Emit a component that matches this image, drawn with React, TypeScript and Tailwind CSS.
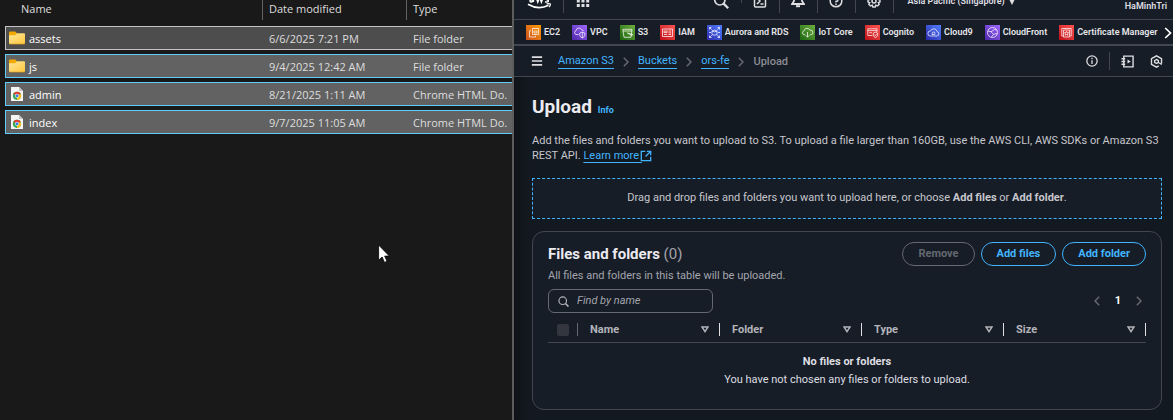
import type { ReactNode } from "react";

type Entry = { name: string; date: string; type: string; kind: "folder" | "html" };

const entries: Entry[] = [
  { name: "assets", date: "6/6/2025 7:21 PM", type: "File folder", kind: "folder" },
  { name: "js", date: "9/4/2025 12:42 AM", type: "File folder", kind: "folder" },
  { name: "admin", date: "8/21/2025 1:11 AM", type: "Chrome HTML Do.", kind: "html" },
  { name: "index", date: "9/7/2025 11:05 AM", type: "Chrome HTML Do.", kind: "html" },
];

function FolderIcon() {
  return (
    <svg viewBox="0 0 16 14" className="h-3.5 w-4 shrink-0" aria-hidden="true">
      <defs>
        <linearGradient id="folder" x1="0" y1="0" x2="1" y2="1">
          <stop offset="0" stopColor="#ffe69a" />
          <stop offset="1" stopColor="#ffc83d" />
        </linearGradient>
      </defs>
      <path d="M0 1.5Q0 .5 1 .5H6.3L8 2.3V5H0Z" fill="#f2a900" />
      <path d="M0 4.3H6L8 2.3H15Q16 2.3 16 3.3V12Q16 13 15 13H1Q0 13 0 12Z" fill="url(#folder)" />
      <path d="M.4 13H15.6" stroke="#e0a020" strokeWidth=".7" />
    </svg>
  );
}

function ChromeFileIcon() {
  return (
    <svg viewBox="0 0 12 14" className="mx-0.5 h-3.5 w-3 shrink-0" aria-hidden="true">
      <path d="M0 0H8L12 4V14H0Z" fill="#f5f5f5" />
      <path d="M8 0L12 4H8Z" fill="#c4c4c4" />
      <circle cx="6" cy="8.8" r="4.1" fill="#34a853" />
      <path d="M6 8.8L2.4 6.8A4.1 4.1 0 0 1 9.7 7Z" fill="#e33b2e" />
      <path d="M6 8.8L9.7 7A4.1 4.1 0 0 1 6 12.9Z" fill="#fbc116" />
      <circle cx="6" cy="8.8" r="2" fill="#fff" />
      <circle cx="6" cy="8.8" r="1.5" fill="#3b78e7" />
    </svg>
  );
}

function Explorer() {
  const cols = "grid grid-cols-[258px_144px_minmax(0,1fr)]";
  return (
    <section className="min-w-0 overflow-hidden border-r-2 border-[#5c5c5c] bg-[#191919] pl-[5px] font-['Open_Sans',sans-serif] text-[11px] text-[#dedede]">
      <div className={`${cols} h-5 leading-[17px]`}>
        <span className="border-r border-[#636363] pl-4">Name</span>
        <span className="border-r border-[#636363] pl-1.5">Date modified</span>
        <span className="pl-1.5">Type</span>
      </div>
      <ul className="mt-1.5 flex flex-col gap-1">
        {entries.map((e, i) => (
          <li
            key={e.name}
            className={`${cols} h-6 items-center border border-r-0 ${
              i === 0 ? "border-[#c4c4c4] bg-[#4d4d4d]" : "border-[#60cdff] bg-[#626262]"
            }`}
          >
            <span className="flex items-center gap-1 pl-[3px] text-white">
              {e.kind === "folder" ? <FolderIcon /> : <ChromeFileIcon />}
              <span className="pt-0.5">{e.name}</span>
            </span>
            <span className="pt-0.5 pl-[5px]">{e.date}</span>
            <span className="pt-0.5 pl-[5px] whitespace-nowrap">{e.type}</span>
          </li>
        ))}
      </ul>
    </section>
  );
}

const services: { name: string; tile: string; icon: ReactNode }[] = [
  {
    name: "EC2",
    tile: "bg-linear-to-tr from-[#c8511b] to-[#ff9900]",
    icon: <path d="M6.5 3.5H12.5V9.5H6.5ZM5 5.8H3.5V12H9.5V10.8M8 6H11V8H8Z" />,
  },
  {
    name: "VPC",
    tile: "bg-linear-to-tr from-[#4d27aa] to-[#a166ff]",
    icon: <path d="M6.5 9.5H4A2 2 0 0 1 4 5.7A3 3 0 0 1 9.7 4.8A2 2 0 0 1 11.6 6M7.8 8L10.3 7L12.8 8V10.5Q12.5 12 10.3 13Q8 12 7.8 10.5ZM10.3 7V13" />,
  },
  {
    name: "S3",
    tile: "bg-linear-to-tr from-[#1b660f] to-[#6cae3e]",
    icon: <path d="M2.8 4.3H12L11 12.3H4L2.8 4.3ZM3 6H12M7.5 8L12.8 9.6L12 10.6L7.5 8" />,
  },
  {
    name: "IAM",
    tile: "bg-linear-to-tr from-[#bd0816] to-[#ff5252]",
    icon: <path d="M2.5 4H12.5V11.5H2.5ZM4 6H7V7.6H4ZM8.5 6H11M8.5 7.8H11M4 9.5H7M8.5 9.5H11" />,
  },
  {
    name: "Aurora and RDS",
    tile: "bg-linear-to-tr from-[#2e27ad] to-[#527fff]",
    icon: <path d="M2.5 4.5V2.5H4.5M10.5 2.5H12.5V4.5M12.5 10.5V12.5H10.5M4.5 12.5H2.5V10.5M2.5 2.5L4.7 4.7M12.5 2.5L10.3 4.7M2.5 12.5L4.7 10.3M12.5 12.5L10.3 10.3M5 6Q7.5 4.2 10 6V9.5Q7.5 11 5 9.5ZM5 6Q7.5 7.7 10 6M2 7.5H4M11 7.5H13" />,
  },
  {
    name: "IoT Core",
    tile: "bg-linear-to-tr from-[#1b660f] to-[#6cae3e]",
    icon: <path d="M5.2 9.8H4A2.1 2.1 0 0 1 4 5.8A3.2 3.2 0 0 1 10 5.2A2.3 2.3 0 0 1 11 9.8H9.8M7.5 7V12M5.8 10.4L7.5 12.2L9.2 10.4" />,
  },
  {
    name: "Cognito",
    tile: "bg-linear-to-tr from-[#bd0816] to-[#ff5252]",
    icon: <path d="M7.3 10.5H2.8V3.8H12V7M2.8 5.6H12M4.2 7.7H7M8.3 8L10.4 7.2L12.6 8V10.3Q12.2 11.8 10.4 12.6Q8.6 11.8 8.3 10.3ZM9.3 9.8L10.2 10.7L11.6 9.1" />,
  },
  {
    name: "Cloud9",
    tile: "bg-linear-to-tr from-[#2e27ad] to-[#527fff]",
    icon: <path d="M4.3 11H11A2.3 2.3 0 0 0 11 6.5A3.4 3.4 0 0 0 4.5 6A2.5 2.5 0 0 0 4.3 11ZM6.3 8.5A1.3 1.3 0 1 1 8.8 8.7V9.5H6V8.3" />,
  },
  {
    name: "CloudFront",
    tile: "bg-linear-to-tr from-[#4d27aa] to-[#a166ff]",
    icon: <path d="M7.5 2.5A5 5 0 1 0 12.5 7.5A5 5 0 0 0 7.5 2.5ZM3 6L6 6.8L9.5 4.5M6 6.8L8.5 9.3L12 8.5M8.5 9.3L6.5 12M9.5 4.5L11.5 5" />,
  },
  {
    name: "Certificate Manager",
    tile: "bg-linear-to-tr from-[#bd0816] to-[#ff5252]",
    icon: <path d="M2.8 11V3.5H12.2V11H10.8M4.2 11H2.8M4.5 5H10.5V12H4.5ZM7.5 6.3L8.1 7.7L9.6 7.8L8.5 8.8L8.8 10.3L7.5 9.5L6.2 10.3L6.5 8.8L5.4 7.8L6.9 7.7Z" />,
  },
];

function Icon({ children, className = "h-3.5 w-3.5" }: { children: ReactNode; className?: string }) {
  return (
    <svg
      viewBox="0 0 14 14"
      className={`shrink-0 ${className}`}
      fill="none"
      stroke="currentColor"
      strokeWidth="1.5"
      aria-hidden="true"
    >
      {children}
    </svg>
  );
}

function TopBar() {
  const cell = "flex w-[37px] items-center justify-center";
  const rule = <span className="h-6 w-px shrink-0 bg-[#424650]" />;
  return (
    <header className="-mt-[18px] flex h-[38px] shrink-0 items-center border-b border-[#424650] pr-1.5 text-[#dedee3]">
      <a href="#home" aria-label="AWS home" className="ml-3 flex w-[26px] shrink-0">
        <svg viewBox="0 0 26 16" className="h-4 w-[26px] text-white" fill="none" stroke="currentColor" aria-hidden="true">
          <path d="M4 5Q6 3.4 7.4 4.6V9M7.4 6.6Q4 6.4 4 8Q4.4 9.8 7.4 8M10 4L11.8 9L13.6 4.3L15.4 9L17.2 4M22.5 4.6Q19.6 3.4 19.4 5.2Q19.6 6.4 21.4 6.8Q22.8 7.6 22 8.7Q20.6 9.4 19.1 8.6" strokeWidth="1.5" />
          <path d="M2 11.2Q12.5 17.4 22.5 12.2" strokeWidth="1.6" />
          <path d="M20.6 10.9Q23.6 10.3 24.4 10.9Q24.4 12.7 23 14" strokeWidth="1.2" />
        </svg>
      </a>
      <span className="ml-[11px] h-6 w-px shrink-0 bg-[#424650]" />
      <button aria-label="Services" className="ml-3 flex">
        <Icon>
          <path d="M.8 2.5H3.8M5.5 2.5H8.5M10.2 2.5H13.2M.8 7H3.8M5.5 7H8.5M10.2 7H13.2M.8 11.5H3.8M5.5 11.5H8.5M10.2 11.5H13.2" strokeWidth="3" />
        </Icon>
      </button>
      <div className="flex-1" />
      <button aria-label="Search" className="mr-3 flex">
        <Icon className="h-4 w-4"><circle cx="6" cy="6" r="4.5" /><path d="M9.3 9.3L13.3 13.3" strokeWidth="2" /></Icon>
      </button>
      <span className="mb-3 h-4 w-px shrink-0 bg-[#424650]" />
      <button aria-label="CloudShell" className={cell}>
        <Icon><rect x="1.5" y="1" width="11" height="12" rx="1" /><path d="M4 4L7 7L4 10M7.5 10H10.5" /></Icon>
      </button>
      {rule}
      <button aria-label="Notifications" className={cell}>
        <Icon><path d="M1 10H13L11 7V5A4 4 0 0 0 3 5V7Z" strokeWidth="1.8" /><path d="M5 12.2H9" strokeWidth="2" /></Icon>
      </button>
      {rule}
      <button aria-label="Help" className={cell}>
        <Icon><circle cx="7" cy="7" r="5.8" /><path d="M5 5.5A2 2 0 1 1 7 7.5V8.5M7 9.5V11" /></Icon>
      </button>
      {rule}
      <button aria-label="Settings" className={cell}>
        <Icon>
          <path d="M5.8 1H8.2L8.7 2.8L10.5 2L12.2 3.8L11.3 5.5L13 6V8L11.3 8.6L12.2 10.3L10.5 12L8.7 11.2L8.2 13H5.8L5.3 11.2L3.5 12L1.8 10.3L2.7 8.6L1 8V6L2.7 5.5L1.8 3.8L3.5 2L5.3 2.8Z" strokeWidth="1.4" />
          <circle cx="7" cy="7" r="2" />
        </Icon>
      </button>
      {rule}
      <button className="mt-0.5 ml-3.5 flex items-center gap-1 text-[9px] font-semibold whitespace-nowrap">
        Asia Pacific (Singapore)
        <svg viewBox="0 0 6 6" className="h-1.5 w-1.5" fill="currentColor" aria-hidden="true"><path d="M0 0H6L3 6Z" /></svg>
      </button>
      <button className="mt-3 ml-[110px] text-[9px] font-semibold">HaMinhTri</button>
    </header>
  );
}

function ServicesBar() {
  return (
    <nav className="flex h-[26px] shrink-0 items-center border-b-2 border-[#424650] pt-px pl-3 text-[#e6e6ea]">
      <ul className="flex min-w-0 flex-1 gap-3 overflow-hidden">
        {services.map((s) => (
          <li key={s.name} className="shrink-0">
            <a href="#service" className="flex items-center gap-[3px] text-[9px] font-semibold">
              <span className={`${s.tile} flex`}>
                <svg viewBox="0 0 15 15" className="h-[15px] w-[15px]" fill="none" stroke="#ffffff" strokeOpacity=".8" strokeWidth=".9" aria-hidden="true">
                  {s.icon}
                </svg>
              </span>
              {s.name}
            </a>
          </li>
        ))}
      </ul>
      <button aria-label="More services" className="mr-px flex text-white">
        <svg viewBox="0 0 8 12" className="h-3 w-2" fill="none" stroke="currentColor" strokeWidth="1.7" aria-hidden="true"><path d="M1.2 1L6.5 6L1.2 11" /></svg>
      </button>
    </nav>
  );
}

function Chevron({ left = false }: { left?: boolean }) {
  return (
    <svg viewBox="0 0 6 10" className="h-2.5 w-1.5 shrink-0 text-[#656871]" fill="none" stroke="currentColor" strokeWidth="1.5" aria-hidden="true">
      <path d={left ? "M5.2 .8L1 5L5.2 9.2" : "M.8 .8L5 5L.8 9.2"} />
    </svg>
  );
}

function BreadcrumbBar() {
  return (
    <div className="flex h-[31px] shrink-0 items-center border-b border-[#424650] pr-2.5 pl-[17px] text-[#dedee3]">
      <button aria-label="Open navigation" className="mr-[15px] flex">
        <Icon className="h-3 w-3"><path d="M1 2.5H13M1 7H13M1 11.5H13" strokeWidth="1.8" /></Icon>
      </button>
      <nav aria-label="Breadcrumb" className="flex items-center gap-[9px] pt-px text-[11px] leading-[14px] text-[#42b4ff]">
        <a href="#s3" className="border-b border-current">Amazon S3</a>
        <Chevron />
        <a href="#buckets" className="border-b border-current">Buckets</a>
        <Chevron />
        <a href="#ors-fe" className="border-b border-current">ors-fe</a>
        <Chevron />
        <span className="font-medium text-[#8c8c94]">Upload</span>
      </nav>
      <div className="ml-auto flex items-center">
        <button aria-label="Info" className="flex">
          <Icon className="h-3 w-3"><circle cx="7" cy="7" r="6" /><path d="M7 6V10.5M7 3.3V5" /></Icon>
        </button>
        <span className="mr-[11px] ml-[11px] h-[18px] w-px bg-[#424650]" />
        <button aria-label="Tutorials" className="flex">
          <Icon className="h-[13px] w-[13px]"><path d="M3 1.2H13V12.8H3ZM.5 4H4.5M.5 7H4.5M.5 10H4.5" /><path d="M7 4.8V9.2L10.5 7Z" fill="currentColor" stroke="none" /></Icon>
        </button>
        <button aria-label="Amazon Q" className="ml-4 flex">
          <Icon className="h-[13px] w-[13px]"><path d="M9.5 11.8L7 13.1L1.6 10V4L7 .9L12.4 4V9.5" /><path d="M7 4.8L9 6V8L7 9.2L5 8V6ZM8.5 7.5L12.6 10.2" /></Icon>
        </button>
      </div>
    </div>
  );
}

function FilterMark() {
  return (
    <svg viewBox="0 0 8 7" className="h-[7px] w-2 shrink-0" fill="none" stroke="currentColor" strokeWidth="1.5" aria-hidden="true">
      <path d="M1 1H7L4 5.6Z" />
    </svg>
  );
}

function FilesCard() {
  const pill = "h-6 rounded-full border px-[15px] text-[11px] font-bold";
  return (
    <section className="mt-3 rounded-xl border border-[#424650] bg-[#161d26] px-[15px] pt-2.5 pb-5">
      <div className="flex items-center justify-between">
        <h2 className="text-[15px] leading-[22px] font-bold text-[#ebebf0]">
          Files and folders <span className="font-normal text-[#a4a4ad]">(0)</span>
        </h2>
        <div className="flex gap-1.5">
          <button disabled className={`${pill} border-[#656871] text-[#656871]`}>Remove</button>
          <button className={`${pill} border-[#42b4ff] text-[#42b4ff]`}>Add files</button>
          <button className={`${pill} border-[#42b4ff] text-[#42b4ff]`}>Add folder</button>
        </div>
      </div>
      <p className="mt-0.5 text-[11px] leading-4 text-[#a4a4ad]">All files and folders in this table will be uploaded.</p>
      <div className="mt-[5px] flex items-center justify-between">
        <label className="flex h-6 w-[165px] items-center gap-2 rounded-md border border-[#656871] px-[9px] text-[#b4b4bb]">
          <Icon className="h-[11px] w-[11px]"><circle cx="6" cy="6" r="4.8" /><path d="M9.5 9.5L13.4 13.4" strokeWidth="2" /></Icon>
          <input
            aria-label="Find by name"
            placeholder="Find by name"
            className="w-full min-w-0 bg-transparent text-[11px] outline-none placeholder:text-[#a4a4ad] placeholder:italic"
          />
        </label>
        <div className="mr-1 flex items-center gap-3.5 text-[11px] font-bold text-white">
          <button aria-label="Previous page" className="flex"><Chevron left /></button>
          <span className="px-px">1</span>
          <button aria-label="Next page" className="flex"><Chevron /></button>
        </div>
      </div>
      <table className="mt-[5px] w-full table-fixed text-left text-[11px]">
        <thead>
          <tr className="h-6 border-b border-[#424650] text-[#b4b4bb]">
            <th className="w-[30px] p-0">
              <div className="flex h-[13px] items-center justify-between border-r border-[#656871] pl-[9px]">
                <input type="checkbox" disabled aria-label="Select all" className="h-3 w-3 appearance-none rounded-xs bg-[#33363f]" />
              </div>
            </th>
            {["Name", "Folder", "Type", "Size"].map((h) => (
              <th key={h} className="p-0">
                <div className="flex h-[13px] items-center justify-between border-r border-[#dedee3] pr-2.5 pl-3">
                  {h}
                  <FilterMark />
                </div>
              </th>
            ))}
          </tr>
        </thead>
        <tbody>
          <tr>
            <td colSpan={5} className="pt-2.5 text-center leading-[18px] text-[#dedee3]">
              <strong className="block">No files or folders</strong>
              You have not chosen any files or folders to upload.
            </td>
          </tr>
        </tbody>
      </table>
    </section>
  );
}

function Console() {
  return (
    <main className="flex min-w-0 flex-col bg-[#161d26] font-['Roboto',sans-serif]">
      <TopBar />
      <ServicesBar />
      <BreadcrumbBar />
      <div className="flex-1 bg-[#131920] bg-[linear-gradient(to_right,#0f1317,#131920_16px)] pr-[11px] pb-[11px] pl-[18px]">
        <h1 className="flex items-baseline gap-1.5 pt-[18px] text-[19px] leading-6 font-bold text-[#ebebf0]">
          Upload
          <a href="#info" className="text-[9px] text-[#42b4ff]">Info</a>
        </h1>
        <p className="mt-[11px] text-[11px] leading-[15px] text-[#c6c6cd]">
          Add the files and folders you want to upload to S3. To upload a file larger than 160GB, use the AWS CLI, AWS SDKs or Amazon S3 REST API.{" "}
          <a href="#learn" className="text-[#42b4ff] underline underline-offset-3">
            Learn more <Icon className="-ml-0.5 inline h-3 w-3"><path d="M6 1.5H1.5V12.5H12.5V8M8 1.5H12.5V6M12.5 1.5L6.5 7.5" /></Icon>
          </a>
        </p>
        <div className="mt-[15px] flex h-[41px] items-center justify-center border border-dashed border-[#42b4ff] bg-[#161d26] text-[11px] text-[#c6c6cd]">
          <p>
            Drag and drop files and folders you want to upload here, or choose <b>Add files</b> or <b>Add folder</b>.
          </p>
        </div>
        <FilesCard />
      </div>
    </main>
  );
}

function Pointer() {
  return (
    <svg viewBox="0 0 12 19" className="pointer-events-none absolute top-[244px] left-[378px] h-[19px] w-3" aria-hidden="true">
      <path d="M.6 1V16.2L4.1 13L6.5 18.4L9 17.2L6.7 12.1H11.4Z" fill="#fff" stroke="#000" strokeWidth=".8" />
    </svg>
  );
}

export default function App() {
  return (
    <div className="relative grid min-h-screen grid-cols-[514fr_659fr] overflow-hidden bg-[#191919]">
      <Explorer />
      <Console />
      <Pointer />
    </div>
  );
}
